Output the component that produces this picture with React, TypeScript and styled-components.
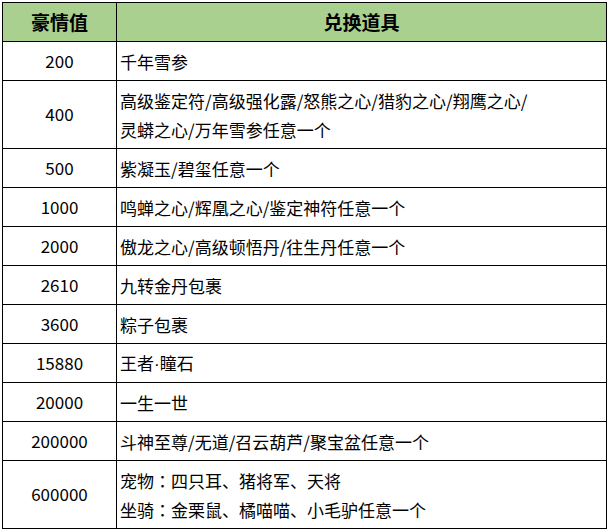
import styled, { createGlobalStyle } from "styled-components";
import type { ReactNode } from "react";

const GlobalStyle = createGlobalStyle`
  body {
    margin: 0;
    background: #ffffff;
    font-family: "Noto Sans CJK SC", "Noto Sans", sans-serif;
    color: #000;
  }
`;

const Wrap = styled.div`
  padding: 2px 0 0 2px;
`;

const Table = styled.table`
  border-collapse: collapse;
  width: 605px;
  table-layout: fixed;
`;

const HeadCell = styled.th`
  background: #a9d08e;
  border: 1px solid #000;
  font-size: 19px;
  font-weight: 700;
  text-align: center;
  padding: 0;
  height: 38px;
  line-height: 24px;
`;

const Row = styled.tr<{ $tall?: boolean }>`
  height: ${(p) => (p.$tall ? "68px" : "39px")};
`;

const ValueCell = styled.td`
  border: 1px solid #000;
  text-align: center;
  font-size: 17px;
  padding: 0 0 2px;
  vertical-align: middle;
`;

const ItemCell = styled.td`
  border: 1px solid #000;
  text-align: left;
  font-size: 17px;
  padding: 0 0 0 3px;
  line-height: 29px;
  vertical-align: middle;
`;

// narrow latin middle dot
const Dot = styled.span`
  font-family: "Liberation Sans", sans-serif;
`;

// centred full-width colon
const Colon = styled.span`
  font-family: "Noto Sans CJK TC", sans-serif;
`;

// exchange list: value -> items (one entry per line)
const rows: { value: string; items: ReactNode[] }[] = [
  { value: "200", items: ["千年雪参"] },
  {
    value: "400",
    items: ["高级鉴定符/高级强化露/怒熊之心/猎豹之心/翔鹰之心/", "灵蟒之心/万年雪参任意一个"],
  },
  { value: "500", items: ["紫凝玉/碧玺任意一个"] },
  { value: "1000", items: ["鸣蝉之心/辉凰之心/鉴定神符任意一个"] },
  { value: "2000", items: ["傲龙之心/高级顿悟丹/往生丹任意一个"] },
  { value: "2610", items: ["九转金丹包裹"] },
  { value: "3600", items: ["粽子包裹"] },
  {
    value: "15880",
    items: [
      <>
        王者<Dot>·</Dot>瞳石
      </>,
    ],
  },
  { value: "20000", items: ["一生一世"] },
  { value: "200000", items: ["斗神至尊/无道/召云葫芦/聚宝盆任意一个"] },
  {
    value: "600000",
    items: [
      <>
        宠物<Colon>：</Colon>四只耳、猪将军、天将
      </>,
      <>
        坐骑<Colon>：</Colon>金栗鼠、橘喵喵、小毛驴任意一个
      </>,
    ],
  },
];

export default function App() {
  return (
    <Wrap>
      <GlobalStyle />
      <Table>
        <colgroup>
          <col style={{ width: 114 }} />
          <col />
        </colgroup>
        <thead>
          <tr>
            <HeadCell>豪情值</HeadCell>
            <HeadCell>兑换道具</HeadCell>
          </tr>
        </thead>
        <tbody>
          {rows.map((r) => (
            <Row key={r.value} $tall={r.items.length > 1}>
              <ValueCell>{r.value}</ValueCell>
              <ItemCell>
                {r.items.map((line, i) => (
                  <div key={i}>{line}</div>
                ))}
              </ItemCell>
            </Row>
          ))}
        </tbody>
      </Table>
    </Wrap>
  );
}
